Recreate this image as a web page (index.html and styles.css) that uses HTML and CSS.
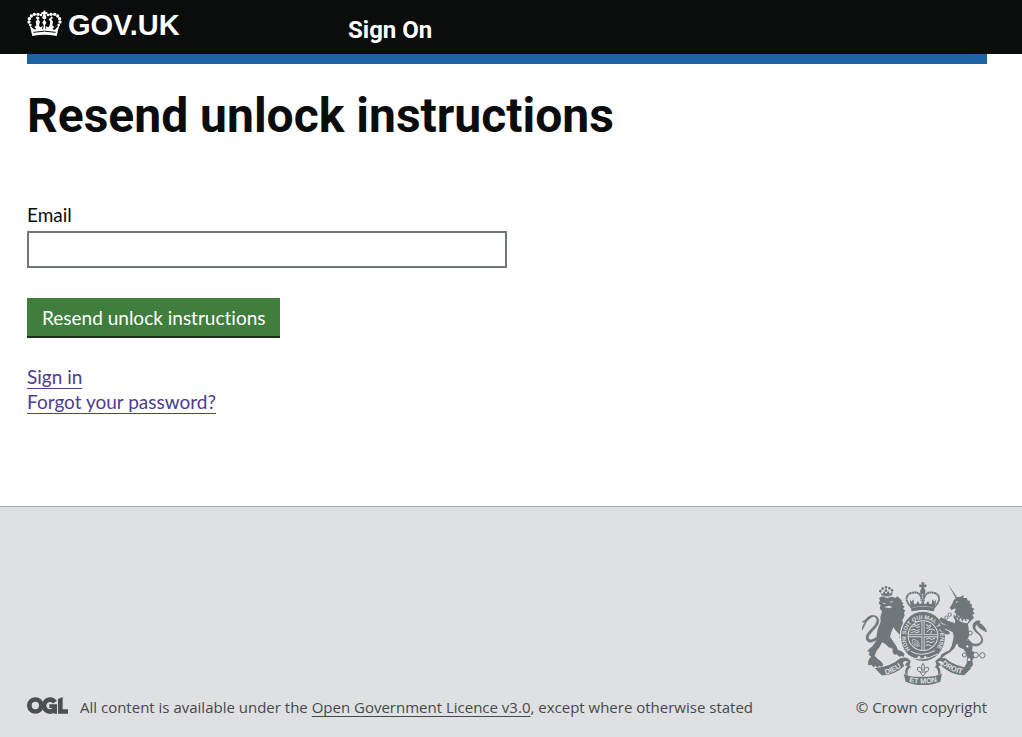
FILE: index.html
```html
<!DOCTYPE html>
<html lang="en">
<head>
<meta charset="utf-8">
<meta name="viewport" content="width=device-width, initial-scale=1">
<title>Resend unlock instructions - GOV.UK Sign On</title>
<link rel="stylesheet" href="styles.css">
</head>
<body>
<header class="header">
  <div class="header-inner">
    <a class="logo" href="#">
      <svg class="crown" viewBox="21 30 105 84" aria-hidden="true" fill="#fff">
        <path d="M70 32h7l-1 5 6-1v7l-6-1 1 7h-8l1-7-6 1v-7l6 1z"/>
        <circle cx="73" cy="52" r="6"/>
        <circle cx="63" cy="45" r="4"/><circle cx="54" cy="43" r="5"/><circle cx="43" cy="43" r="5"/><circle cx="34" cy="48" r="5"/><circle cx="28" cy="56" r="5"/><circle cx="27" cy="66" r="5"/><circle cx="31" cy="75" r="4"/>
        <circle cx="84" cy="45" r="4"/><circle cx="93" cy="43" r="5"/><circle cx="104" cy="43" r="5"/><circle cx="113" cy="48" r="5"/><circle cx="119" cy="56" r="5"/><circle cx="120" cy="66" r="5"/><circle cx="116" cy="75" r="4"/>
        <path d="M29 76 37 108Q73 101 110 108L118 76 110 83Q107 90 101 89L97 86 103 81Q99 80 97 75L99 65 94 58 99 54 95 49 91 54 86 58 91 65 89 76Q88 80 84 82L77 78 79 85 77 89 75 76 79 68 73 58 67 68 71 76 69 89 66 85 69 78 62 82Q58 80 57 76L60 65 55 58 60 54 51 49 47 54 52 58 47 65 49 75Q47 80 43 81L49 86Q43 92 37 83Z"/>
        <path d="M40 97Q73 90 107 97" fill="none" stroke="#0b0c0c" stroke-width="3"/>
      </svg>
      <span>GOV.UK</span>
    </a>
    <a class="service" href="#">Sign On</a>
  </div>
</header>
<main class="main">
  <div class="bar"></div>
  <h1 class="title">Resend unlock instructions</h1>
  <form class="form">
    <label class="label" for="email">Email</label>
    <input class="input" id="email" name="email" type="email">
    <button class="button" type="submit">Resend unlock instructions</button>
  </form>
  <nav class="links">
    <a href="#">Sign in</a>
    <a href="#">Forgot your password?</a>
  </nav>
</main>
<footer class="footer">
  <div class="footer-inner">
    <div class="licence">
      <svg class="ogl" viewBox="21 33 123 51" aria-label="Open Government Licence" role="img">
        <g fill="none" stroke="#4b5052" stroke-width="14">
          <circle cx="46" cy="58.500" r="18"/>
          <path d="M105 49A18 18 0 1 0 103 71"/>
        </g>
        <path d="M88 55h23v28h-9l-2-6h-2v-11H88zM114 39l14-6v37h16v13h-30z" fill="#4b5052"/>
      </svg>
      <span>All content is available under the <a href="#">Open Government Licence v3.0</a>, except where otherwise stated</span>
    </div>
    <a class="copyright" href="#">
      <svg class="crest" viewBox="66 36 375 309" aria-hidden="true" fill="#6f777b">
        <g id="lion">
          <path d="M117 84 126 79 140 84 158 80 166 84 172 79 180 86 186 91 184 95 191 99 187 104 194 110 189 116 196 122 192 128 194 137 187 151 191 166 197 180 194 190 202 202 198 210 190 205 184 214 178 203 180 195 169 184 160 172 155 184 150 200 157 211 165 222 170 230 174 240 184 243 193 251 192 260 184 258 178 260 170 253 162 254 157 244 159 237 146 232 136 222 126 217 119 231 110 242 104 257 110 264 125 276 130 284 125 292 119 287 112 292 106 288 100 292 95 285 85 286 84 275 88 266 94 260 86 255 89 246 82 244 88 236 98 228 108 213 110 195 113 177 122 155 121 140 126 125 119 114 122 107 116 99 120 92Z"/>
          <path d="M120 64 126 79Q140 84 156 77L158 63 150 72 145 62 138 72 133 63 127 72Z"/>
          <path d="M124 77q16 6 33 0" fill="none" stroke="#dee0e2" stroke-width="2"/>
          <g><circle cx="138" cy="52" r="4"/><circle cx="128" cy="56" r="4"/><circle cx="121" cy="63" r="4"/><circle cx="148" cy="55" r="4"/><circle cx="156" cy="61" r="4"/><circle cx="138" cy="62" r="4"/></g>
          <path d="M111 208Q94 222 83 214C72 202 83 188 94 177S113 157 110 146Q104 134 92 143L80 154Q74 166 66 181 67 164 77 157L67 156Q79 150 83 142C96 132 114 136 116 150 118 163 106 174 97 184S82 200 87 208Q94 214 108 202Z" stroke="#6f777b" stroke-width="2"/>
          <path d="M126 98l13 2-6 2zM149 95l12-1-7 4zM133 111l14-4 11 4-12 4z" fill="#dee0e2"/>
        </g>
        <g id="royal-crown">
          <path d="M244 37h9l-1 7 7-1v9l-7-1 2 8h-11l2-8-7 1v-9l7 1z"/>
          <circle cx="248.500" cy="64" r="8"/>
          <path d="M215 112C195 94 195 76 213 69 231 64 240 70 244 83M282 112C302 94 302 76 284 69 266 64 257 70 253 83M244 68V92M252 68V92" fill="none" stroke="#6f777b" stroke-width="6" stroke-dasharray="6 1"/>
          <path d="M209 88 214 95 220 88 222 103 229 101 234 92 238 101 244 102 248 82 253 102 259 101 264 92 268 101 275 103 277 88 283 95 289 88 282 124Q248 115 215 124Z"/>
          <path d="M218 113Q249 105 279 113" fill="none" stroke="#dee0e2" stroke-width="2"/>
        </g>
        <ellipse cx="249" cy="199" rx="70" ry="77" fill="#dee0e2"/>
        <path d="M215 124Q249 115 282 124L282 114Q249 107 215 114Z"/>
        <ellipse cx="249" cy="199" rx="66" ry="74"/>
        <circle cx="249" cy="197" r="46" fill="#dee0e2"/>
        <g id="shield">
          <circle cx="249" cy="197" r="43"/>
          <path d="M205 197H293M249 153V241" stroke="#dee0e2" stroke-width="9"/>
          <path d="M217 171l8-4 5 5 10-2M212 181l10-3 7 4 10-3M222 163l8 3 9-4M213 188l10-3 7 3 9-3M259 162l5 7 9-4M258 174h10l4-6M260 187l7-8 12-2 6 7M275 183l-3 8M258 208l9-4 8 4 10-3M257 217l8-3 8 4 10-4M257 227l8-3 9 4" stroke="#dee0e2" stroke-width="3" fill="none"/>
          <path d="M218 208Q236 207 238 228M218 208v13q7 10 20 7M225 211v16M231 215v14" stroke="#dee0e2" stroke-width="2" fill="none"/>
          <path d="M206 197H292M249 153V241" stroke="#6f777b" stroke-width="4"/>
        </g>
        <path id="garter-text" d="M211 238A52 54 0 1 1 287 238" fill="none"/>
        <text class="garter"><textPath href="#garter-text">HONI SOIT QUI MAL Y PENSE</textPath></text>
        <path d="M203 256Q242 280 293 252M213 244Q242 263 285 242" fill="none" stroke="#dee0e2" stroke-width="3"/>
        <circle cx="237" cy="262" r="4" fill="#dee0e2"/><circle cx="256" cy="262" r="4" fill="#dee0e2"/>
        <g id="unicorn">
          <path d="M324 42 351 82 362 80 371 75 370 84 381 84 382 91 391 93 389 100 397 104 394 111 403 117 398 123 404 131 397 134 402 144 392 153 384 162 386 176 388 194 382 211 391 217 398 229 396 242 407 249 404 261 397 270 399 284 394 292 382 297 373 292 380 280 382 265 378 250 371 238 357 232 351 220 343 235 330 247 315 256 306 263 299 263 305 253 315 247 328 241 335 228 339 211 341 200 338 184 336 166 344 160 346 153 340 140 344 124 348 116 341 116 335 121 329 113 337 101 341 91 347 85Z"/>
          <path d="M342 126Q361 146 388 149L382 160Q354 156 337 134Z" fill="#dee0e2"/>
          <path d="M342 136l6 8 2-9 7 13 4-10 6 13 5-10 7 12" fill="none" stroke="#6f777b" stroke-width="4"/>
          <path d="M347 96l8-3-5 6z" fill="#dee0e2"/>
          <path d="M342 160 323 154 303 143 299 149 307 158 321 165 340 174M343 174 323 168 305 164 299 172 306 184 322 193 329 190 325 184 315 181 311 174 324 178 344 188" stroke="#6f777b" stroke-width="3"/>
        </g>
        <path d="M385 207Q397 226 412 222C431 217 425 199 414 191 399 181 395 170 402 158Q410 150 420 153L418 159Q436 169 440 186L425 178Q415 174 411 163 401 168 408 180C419 192 432 201 427 217 417 231 400 233 385 217Z" stroke="#6f777b" stroke-width="2"/>
        <g fill="#dee0e2" stroke="#6f777b" stroke-width="3">
          <circle cx="329" cy="134" r="5"/><circle cx="319" cy="143" r="5"/><circle cx="391" cy="189" r="6"/><circle cx="382" cy="229" r="5"/><circle cx="373" cy="255" r="6"/><circle cx="387" cy="269" r="6"/><circle cx="407" cy="255" r="8"/><circle cx="427" cy="256" r="8"/>
        </g>
        <g id="ribbon">
          <path d="M104 294Q149 292 183 263L191 269Q186 278 193 288 162 317 125 316ZM394 294Q348 292 314 263L307 269Q312 278 304 288 338 317 373 316Z"/>
          <path d="M184 266Q197 257 212 273L207 291 195 286Q196 278 205 275 193 270 188 279ZM314 266Q301 257 286 273L291 291 303 286Q302 278 293 275 305 270 310 279Z"/>
          <path d="M191 311Q217 323 249 320 280 323 306 311L301 335Q249 357 197 335ZM207 285Q193 295 196 311L203 315Q200 298 213 291ZM290 285Q304 295 301 311L294 315Q297 298 284 291Z"/>
          <path d="M249 280Q257 289 252 298L252 302Q256 288 265 293 269 304 256 306L254 313 249 318 244 313 242 306Q229 304 233 293 242 288 246 302L246 298Q241 289 249 280Z" fill="#dee0e2" stroke="#6f777b" stroke-width="3"/>
          <path d="M240 306H258" stroke="#6f777b" stroke-width="3"/>
        </g>
        <path id="motto-left" d="M137 314Q163 308 192 285" fill="none"/>
        <path id="motto-mid" d="M207 336Q249 346 297 334" fill="none"/>
        <path id="motto-right" d="M305 282Q332 306 370 312" fill="none"/>
        <g class="motto">
          <text><textPath href="#motto-left">DIEU</textPath></text>
          <text><textPath href="#motto-mid">ET MON</textPath></text>
          <text><textPath href="#motto-right">DROIT</textPath></text>
        </g>
      </svg>
      <span>© Crown copyright</span>
    </a>
  </div>
</footer>
</body>
</html>
```
FILE: styles.css
```css
* { box-sizing: border-box; }
body {
  margin: 0;
  min-height: 100vh;
  display: flex;
  flex-direction: column;
  background: #fff;
  color: #0b0c0c;
  font: 19px/25px Lato, "Liberation Sans", sans-serif;
  font-variant-ligatures: none;
}
.header { background: #0b0c0c; }
.header-inner, .main, .footer-inner {
  width: 100%;
  padding-left: 27px;
  padding-right: 35px;
}
.header-inner {
  display: grid;
  grid-template-columns: 1fr 2fr;
  height: 54px;
}
.logo, .service { color: #fff; text-decoration: none; font-weight: 700; }
.logo {
  display: flex;
  gap: 6px;
  padding-top: 10px;
  font: 700 29px/31px "Liberation Sans", Arial, sans-serif;
}
.crown { width: 35px; height: 28px; }
.service { padding: 15px 0 0 1px; font: 700 24px/30px Roboto, sans-serif; }
.bar { height: 10px; background: #1d62a3; }
.title { margin: 27px 0 0; font: 700 48px/50px Roboto, sans-serif; }
.form {
  display: flex;
  flex-direction: column;
  align-items: flex-start;
  padding-top: 61px;
}
.label { margin-bottom: 4px; }
.input {
  width: 50%;
  height: 37px;
  padding: 5px;
  border: 2px solid #6f777b;
  border-radius: 0;
  font: inherit;
}
.button {
  margin-top: 30px;
  height: 40px;
  padding: 0 15px;
  border: 0;
  border-bottom: 2px solid #1a2e1a;
  background: #3f7e3d;
  color: #fff;
  font: inherit;
}
.links {
  display: flex;
  flex-direction: column;
  align-items: flex-start;
  padding: 26px 0 92px;
}
.links a { color: #4c3c92; text-underline-offset: 4px; text-decoration-thickness: 1px; text-decoration-skip-ink: none; }
.footer {
  flex: 1;
  background: #dee0e2;
  border-top: 1px solid #a1acb2;
  color: #454a4c;
  font: 15px/20px "Open Sans", sans-serif;
}
.footer-inner {
  display: flex;
  justify-content: space-between;
  align-items: flex-end;
  padding-top: 75px;
  padding-bottom: 20px;
}
.licence { display: flex; gap: 12px; }
.licence a { color: inherit; text-underline-offset: 3px; text-decoration-thickness: 1px; text-decoration-skip-ink: none; }
.ogl { width: 41px; height: 17px; }
.copyright {
  display: flex;
  flex-direction: column;
  align-items: flex-end;
  gap: 12px;
  color: inherit;
  text-decoration: none;
}
.crest { width: 125px; height: 103px; }
.garter { font: 700 17px "Liberation Sans", sans-serif; fill: #dee0e2; }
.motto { font: 700 22px "Liberation Sans", sans-serif; fill: #dee0e2; }
```
